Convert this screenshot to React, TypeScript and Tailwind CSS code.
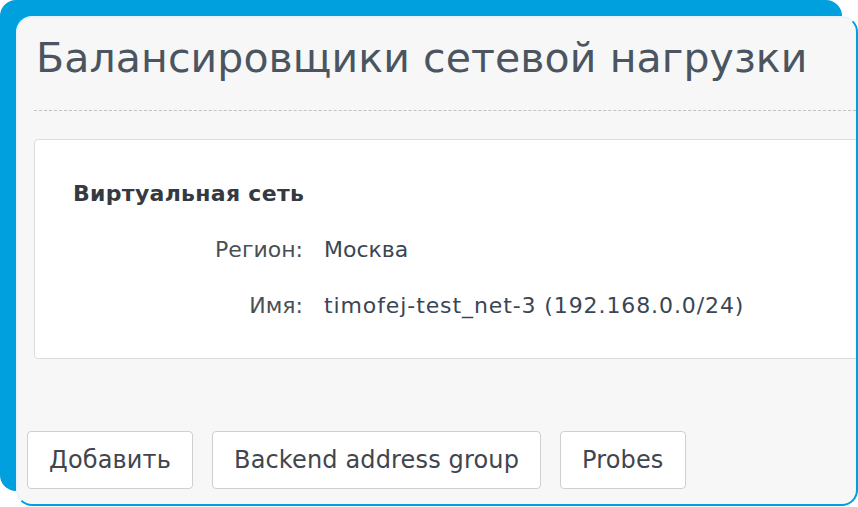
const rows = [
  { label: 'Регион:', value: 'Москва', wide: false },
  { label: 'Имя:', value: 'timofej-test_net-3 (192.168.0.0/24)', wide: true },
];

const buttons = ['Добавить', 'Backend address group', 'Probes'];

export default function App() {
  return (
    <div className="relative w-[858px] h-[507px] overflow-hidden bg-white font-['DejaVu_Sans',sans-serif]">
      {/* blue frame behind the card */}
      <div className="absolute left-0 top-0 w-[842px] h-[491px] rounded-[16px] bg-[#00a0df]" />
      <div className="relative ml-[16px] mt-[16px] w-[842px] h-[490px] rounded-[16px] border-2 border-[#00a0df] border-t-[#e8f4fa] border-l-[#e8f4fa] bg-[#f7f7f7] pl-[16px] overflow-hidden">
        <h1 className="pt-[14px] pb-[26px] pl-[2px] text-[41px] leading-[52px] tracking-[0.1px] text-[#4a5561] whitespace-nowrap">
          Балансировщики сетевой нагрузки
        </h1>
        <div className="border-t border-dashed border-[#c2c2c2]" />
        <div className="mt-[28px] -mr-[10px] h-[220px] rounded-[4px] border border-[#dcdcdc] bg-white pl-[38px] pt-[41px]">
          <div className="text-[22px] leading-[26px] tracking-[0.3px] font-bold text-[#333a42]">Виртуальная сеть</div>
          <div className="mt-[30px] flex flex-col gap-[30px]">
            {rows.map((r) => (
              <div key={r.label} className="flex items-center text-[22px] leading-[26px]">
                <span className="w-[230px] text-right text-[#4a4f55]">{r.label}</span>
                <span className={`ml-[21px] text-[#3a4653] ${r.wide ? 'tracking-[0.9px]' : ''}`}>{r.value}</span>
              </div>
            ))}
          </div>
        </div>
        <div className="mt-[72px] -ml-[7px] flex gap-[19px]">
          {buttons.map((b) => (
            <div
              key={b}
              className="h-[58px] flex items-center rounded-[4px] border border-[#cfcfcf] bg-white px-[21px] text-[24px] tracking-[0.15px] text-[#3f464d]"
            >
              {b}
            </div>
          ))}
        </div>
      </div>
    </div>
  );
}
